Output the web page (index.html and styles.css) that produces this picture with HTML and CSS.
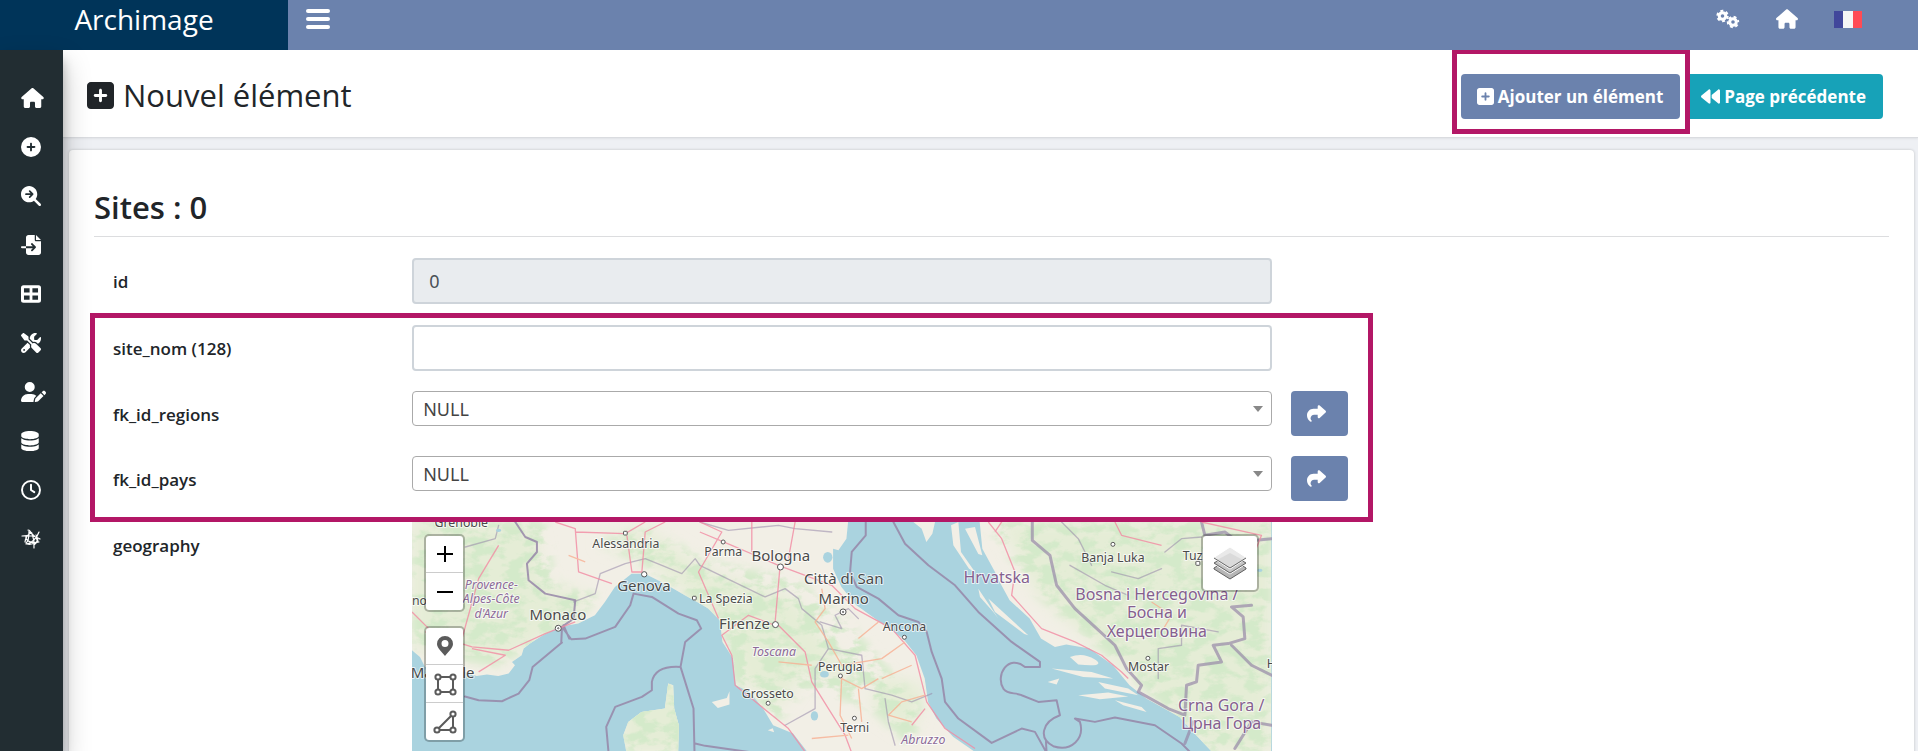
FILE: index.html
```html
<!DOCTYPE html>
<html lang="fr">
<head>
<meta charset="utf-8">
<meta name="viewport" content="width=device-width, initial-scale=1">
<title>Archimage - Nouvel élément</title>
<link rel="stylesheet" href="styles.css">
</head>
<body>
<svg class="symbols" aria-hidden="true">
  <symbol id="i-house" viewBox="0 0 576 512"><path d="M575.8 255.5c0 18-15 32.1-32 32.1h-32l.7 160.2c0 2.7-.2 5.4-.5 8.1V472c0 22.1-17.9 40-40 40H456c-1.1 0-2.2 0-3.3-.1c-1.4 .1-2.8 .1-4.2 .1H416 392c-22.1 0-40-17.9-40-40V448 384c0-17.7-14.3-32-32-32H256c-17.7 0-32 14.3-32 32v64 24c0 22.1-17.9 40-40 40H160 128.1c-1.5 0-3-.1-4.5-.2c-1.2 .1-2.4 .2-3.6 .2H104c-22.1 0-40-17.9-40-40V360c0-.9 0-1.9 .1-2.8V287.6H32c-18 0-32-14-32-32.1c0-9 3-17 10-24L266.4 8c7-7 15-8 22-8s15 2 21 7L564.8 231.5c8 7 12 15 11 24z"/></symbol>
  <symbol id="i-circle-plus" viewBox="0 0 512 512"><path d="M256 512A256 256 0 1 0 256 0a256 256 0 1 0 0 512zM232 344V280H168c-13.3 0-24-10.7-24-24s10.7-24 24-24h64V168c0-13.3 10.7-24 24-24s24 10.7 24 24v64h64c13.3 0 24 10.7 24 24s-10.7 24-24 24H280v64c0 13.3-10.7 24-24 24s-24-10.7-24-24z"/></symbol>
  <symbol id="i-square-plus" viewBox="0 32 448 448"><path d="M64 32C28.7 32 0 60.7 0 96V416c0 35.3 28.7 64 64 64H384c35.3 0 64-28.7 64-64V96c0-35.3-28.7-64-64-64H64zM200 344V280H136c-13.3 0-24-10.7-24-24s10.7-24 24-24h64V168c0-13.3 10.7-24 24-24s24 10.7 24 24v64h64c13.3 0 24 10.7 24 24s-10.7 24-24 24H248v64c0 13.3-10.7 24-24 24s-24-10.7-24-24z"/></symbol>
  <symbol id="i-search-arrow" viewBox="0 0 512 512"><path d="M416 208c0 45.9-14.9 88.3-40 122.7L502.6 457.4c12.5 12.5 12.5 32.8 0 45.3s-32.8 12.5-45.3 0L330.7 376c-34.4 25.2-76.8 40-122.7 40C93.1 416 0 322.9 0 208S93.1 0 208 0S416 93.1 416 208z"/><path class="cut" d="M128 208h164M222 132l76 76-76 76"/></symbol>
  <symbol id="i-file-import" viewBox="0 0 512 512"><path d="M128 64c0-35.3 28.7-64 64-64H352V128c0 17.7 14.3 32 32 32H512V448c0 35.3-28.7 64-64 64H192c-35.3 0-64-28.7-64-64V336H302.1l-39 39c-9.4 9.4-9.4 24.6 0 33.9s24.6 9.4 33.9 0l80-80c9.4-9.4 9.4-24.6 0-33.9l-80-80c-9.4-9.4-24.6-9.4-33.9 0s-9.4 24.6 0 33.9l39 39H128V64zm0 224v48H24c-13.3 0-24-10.7-24-24s10.7-24 24-24H128zM512 128H384V0L512 128z"/></symbol>
  <symbol id="i-table" viewBox="0 0 512 512"><path fill-rule="evenodd" d="M64 32H448a64 64 0 0 1 64 64V416a64 64 0 0 1-64 64H64a64 64 0 0 1-64-64V96a64 64 0 0 1 64-64zM76 108V220H220V108zM292 108V220H436V108zM76 292V404H220V292zM292 292V404H436V292z"/></symbol>
  <symbol id="i-tools" viewBox="0 0 512 512"><path d="M78.6 5C69.1-2.4 55.6-1.5 47 7L7 47c-8.5 8.5-9.4 22-2.1 31.6l80 104c4.5 5.9 11.6 9.4 19 9.4h54.1l109 109c-14.7 29-10 65.4 14.3 89.6l112 112c12.5 12.5 32.8 12.5 45.3 0l64-64c12.5-12.5 12.5-32.8 0-45.3l-112-112c-24.2-24.2-60.6-29-89.6-14.3l-109-109V104c0-7.5-3.5-14.5-9.4-19L78.6 5zM19.9 396.1C7.2 408.8 0 426.1 0 444.1C0 481.6 30.4 512 67.9 512c18 0 35.3-7.2 48-19.9L233.7 374.3c-7.8-20.9-9-43.6-3.6-65.1l-61.7-61.7L19.9 396.1zM512 144c0-10.5-1.1-20.7-3.2-30.5c-2.4-11.2-16.1-14.1-24.2-6l-63.9 63.9c-3 3-7.1 4.7-11.3 4.7H352c-8.8 0-16-7.2-16-16V102.6c0-4.2 1.7-8.3 4.7-11.3l63.9-63.9c8.1-8.1 5.2-21.8-6-24.2C388.7 1.1 378.5 0 368 0C288.5 0 224 64.5 224 144l0 .8 85.3 85.3c36-9.1 75.8 .5 104 28.7L429 274.5c49-23 83-72.8 83-130.5zM56 432a24 24 0 1 1 48 0 24 24 0 1 1 -48 0z"/></symbol>
  <symbol id="i-user-pen" viewBox="0 0 640 512"><path d="M224 256A128 128 0 1 0 224 0a128 128 0 1 0 0 256zm-45.7 48C79.8 304 0 383.8 0 482.3C0 498.7 13.3 512 29.7 512H322.8c-3.1-8.8-3.7-18.4-1.4-27.8l15-60.1c2.8-11.3 8.6-21.5 16.8-29.7l40.3-40.3c-32.1-31-75.7-50.1-123.9-50.1H178.3zm435.5-68.3c-15.6-15.6-40.9-15.6-56.6 0l-29.4 29.4 71 71 29.4-29.4c15.6-15.6 15.6-40.9 0-56.6l-14.4-14.4zM375.9 417c-4.1 4.1-7 9.2-8.4 14.9l-15 60.1c-1.4 5.5 .2 11.2 4.2 15.2s9.7 5.6 15.2 4.2l60.1-15c5.6-1.4 10.8-4.3 14.9-8.4L576.1 358.7l-71-71L375.9 417z"/></symbol>
  <symbol id="i-database" viewBox="0 0 448 512"><path d="M448 80v48c0 44.2-100.3 80-224 80S0 172.2 0 128V80C0 35.8 100.3 0 224 0S448 35.8 448 80zM393.2 214.7c20.8-7.4 39.9-16.9 54.8-28.6V288c0 44.2-100.3 80-224 80S0 332.2 0 288V186.1c14.9 11.8 34 21.2 54.8 28.6C99.7 230.7 159.5 240 224 240s124.3-9.3 169.2-25.3zM0 346.1c14.9 11.8 34 21.2 54.8 28.6C99.7 390.7 159.5 400 224 400s124.3-9.3 169.2-25.3c20.8-7.4 39.9-16.9 54.8-28.6V432c0 44.2-100.3 80-224 80S0 476.2 0 432V346.1z"/></symbol>
  <symbol id="i-clock" viewBox="0 0 512 512"><g fill="none" stroke="currentColor" stroke-width="50" stroke-linecap="round" stroke-linejoin="round"><circle cx="256" cy="256" r="230"/><path d="M256 120v136l84 56"/></g></symbol>
  <symbol id="i-orbit" viewBox="0 0 20 20"><g fill="none" stroke="currentColor" stroke-width="1.2" stroke-linecap="round" stroke-linejoin="round"><path d="M1 7c6-1 14 0 18 3M7 1c3 0 7 8 6 18M18 3c-2 6-8 12-13 12M4 13c0-3 3-9 7-9M5 7c-1 5 6 8 13 6M8 3c3 1 8 6 9 10M5 14c2-1 3-6 3-12M6 15c4 1 10-1 11-4M15 6c2 3 2 7-2 10"/></g></symbol>
  <symbol id="i-share" viewBox="0 0 512 512"><path d="M307 34.8c-11.5 5.1-19 16.6-19 29.2v64H176C78.8 128 0 206.8 0 304C0 417.3 81.5 467.9 100.2 478.1c2.5 1.4 5.3 1.9 8.1 1.9c10.9 0 19.7-8.9 19.7-19.7c0-7.5-4.3-14.4-9.8-19.5C108.8 431.9 96 414.4 96 384c0-53 43-96 96-96h96v64c0 12.6 7.4 24.1 19 29.2s25 3 34.4-5.4l160-144c6.7-6.1 10.6-14.7 10.6-23.8s-3.8-17.7-10.6-23.8l-160-144c-9.4-8.5-22.9-10.6-34.4-5.4z"/></symbol>
  <symbol id="i-backward" viewBox="0 0 512 512"><path d="M459.5 440.6c9.5 7.9 22.8 9.7 34.1 4.4s18.4-16.6 18.4-29V96c0-12.4-7.2-23.7-18.4-29s-24.5-3.6-34.1 4.4L288 214.3V256v41.7L459.5 440.6zM256 352V256 128 96c0-12.4-7.2-23.7-18.4-29s-24.5-3.6-34.1 4.4l-192 160C4.2 237.5 0 246.5 0 256s4.2 18.5 11.5 24.6l192 160c9.5 7.9 22.8 9.7 34.1 4.4s18.4-16.6 18.4-29V352z"/></symbol>
  <symbol id="i-gears" viewBox="0 0 24 20"><g fill="none" stroke="currentColor"><circle cx="6.5" cy="7" r="3.3" stroke-width="3"/><circle cx="6.5" cy="7" r="5.2" stroke-width="2" stroke-dasharray="2.9 2.545"/><circle cx="17" cy="13" r="3.3" stroke-width="3"/><circle cx="17" cy="13" r="5.2" stroke-width="2" stroke-dasharray="2.9 2.545" stroke-dashoffset="-2.7"/></g></symbol>
</svg>

<header class="topbar">
  <a class="brand" href="#">Archimage</a>
  <nav class="topnav" aria-label="Navigation principale">
    <button class="burger" type="button" aria-label="Menu"><span></span><span></span><span></span></button>
    <div class="topnav-links">
      <a href="#" aria-label="Paramètres"><svg width="24" height="20"><use href="#i-gears"/></svg></a>
      <a href="#" aria-label="Accueil"><svg width="22" height="20"><use href="#i-house"/></svg></a>
      <a href="#" aria-label="Français"><svg width="28" height="17" viewBox="0 0 28 17"><path fill="#41479b" d="M0 0h10v17H0z"/><path fill="#f5f5f5" d="M9 0h10v17H9z"/><path fill="#ff4b55" d="M19 0h9v17h-9z"/></svg></a>
    </div>
  </nav>
</header>

<div class="shell">
  <nav class="sidebar" aria-label="Outils">
    <a href="#" aria-label="Accueil"><svg width="23" height="20"><use href="#i-house"/></svg></a>
    <a href="#" aria-label="Ajouter"><svg width="20" height="20"><use href="#i-circle-plus"/></svg></a>
    <a href="#" aria-label="Rechercher"><svg width="20" height="20"><use href="#i-search-arrow"/></svg></a>
    <a href="#" aria-label="Importer"><svg width="20" height="20"><use href="#i-file-import"/></svg></a>
    <a href="#" aria-label="Tables"><svg width="20" height="20"><use href="#i-table"/></svg></a>
    <a href="#" aria-label="Maintenance"><svg width="20" height="20"><use href="#i-tools"/></svg></a>
    <a href="#" aria-label="Utilisateurs"><svg width="25" height="20"><use href="#i-user-pen"/></svg></a>
    <a href="#" aria-label="Base de données"><svg width="18" height="20"><use href="#i-database"/></svg></a>
    <a href="#" aria-label="Historique"><svg width="20" height="20"><use href="#i-clock"/></svg></a>
    <a href="#" aria-label="Réseau"><svg width="20" height="20"><use href="#i-orbit"/></svg></a>
  </nav>

  <main class="content">
    <div class="page-head">
      <h1><svg width="27" height="27"><use href="#i-square-plus"/></svg>Nouvel élément</h1>
      <div class="actions">
        <div class="marked">
          <button class="btn btn-primary" type="submit" form="item"><svg width="17" height="17"><use href="#i-square-plus"/></svg>Ajouter un élément</button>
          <div class="frame frame-action"></div>
        </div>
        <a class="btn btn-info" href="#"><svg width="19" height="19"><use href="#i-backward"/></svg>Page précédente</a>
      </div>
    </div>

    <section class="card">
      <h2>Sites : 0</h2>
      <form class="fields" id="item">
        <div class="row">
          <label for="id">id</label>
          <div class="control"><input class="text" id="id" type="text" value="0" readonly></div>
        </div>
        <div class="fields marked">
          <div class="row">
            <label for="site_nom">site_nom (128)</label>
            <div class="control"><input class="text" id="site_nom" type="text" maxlength="128"></div>
          </div>
          <div class="row">
            <label for="fk_id_regions">fk_id_regions</label>
            <div class="control"><div class="select"><select id="fk_id_regions"><option>NULL</option></select></div></div>
            <button class="btn btn-primary btn-go" type="button" aria-label="Ouvrir regions"><svg width="19" height="19"><use href="#i-share"/></svg></button>
          </div>
          <div class="row">
            <label for="fk_id_pays">fk_id_pays</label>
            <div class="control"><div class="select"><select id="fk_id_pays"><option>NULL</option></select></div></div>
            <button class="btn btn-primary btn-go" type="button" aria-label="Ouvrir pays"><svg width="19" height="19"><use href="#i-share"/></svg></button>
          </div>
          <div class="frame frame-fields"></div>
        </div>
        <div class="row">
          <span class="label" id="geo-label">geography</span>
          <div class="control">
            <div class="map" role="group" aria-labelledby="geo-label">
              <svg class="tiles" viewBox="0 0 2580 693">
                <defs>
                  <clipPath id="land">
                    <path d="M0 0V385L24 405 39 435 80 440 159 450 194 462 225 458 259 462 290 455 309 430 300 420 329 400 335 380 354 365 389 342 439 315 499 305 549 280 579 240 609 195 659 155 699 155 759 185 819 220 864 245 889 260 924 295 932 360 964 410 972 490 1014 510 1054 560 1084 610 1144 635 1189 693H1694L1624 645 1574 590 1549 540 1539 470 1514 400 1474 350 1404 300 1334 250 1289 195 1264 140 1264 80 1280 85 1304 50 1309 0z"/>
                    <path d="M1704 0L1712 80 1750 150 1764 180 1794 235 1854 290 1888 350 1930 375 1964 368 2034 380 2104 430 2154 490 2204 530 2304 585 2354 640 2404 693H2580V0z"/>
                    <path d="M769 485L784 490 787 560 801 610 799 693H644L634 640 649 600 689 570 759 560z"/>
                    <path d="M1505 0L1530 20 1544 60 1562 35 1570 0zM1618 10L1640 0 1648 90 1690 150 1672 140 1625 70zM1660 20L1690 15 1712 100 1700 96zM1700 200L1760 290 1745 270 1705 225zM1730 230L1850 340 1838 336 1750 270zM1975 405q40-15 75 8t-50 15zM1920 440l120 10 65 20-90-5zM2000 520l90-8 60 12-85 8zM2060 480l90 20 30 20-100-20zM1908 480l35-10-8 18zM2110 535l80 20 15 15-70-20zM900 540l45-12 8-20v40l-35 10zM1068 625l15-6 4 12z"/>
                  </clipPath>
                  <filter id="soft" x="-20%" y="-20%" width="140%" height="140%"><feGaussianBlur stdDeviation="24"/></filter>
                  <filter id="woods" x="0" y="0" width="100%" height="100%">
                    <feTurbulence type="fractalNoise" baseFrequency="0.018 0.03" numOctaves="5" seed="7"/>
                    <feColorMatrix values="0 0 0 0 0.66 0 0 0 0 0.82 0 0 0 0 0.59 0 5 0 0 -2.1" result="n"/>
                    <feGaussianBlur in="SourceGraphic" stdDeviation="14" result="s"/>
                    <feComposite in="n" in2="s" operator="in"/>
                  </filter>
                </defs>
                <path fill="#aad3df" d="M0 0H2580V693H0z"/>
                <g clip-path="url(#land)">
                  <path fill="#f2efe6" d="M0 0H2580V693H0z"/>
                  <g fill="#e5edd6" filter="url(#soft)">
                    <path d="M0 0H360L400 190 540 220 470 300 250 430 0 380zM560 60L700 20 900 150 1150 230 1330 480 1180 450 1100 560 980 470 960 340 860 240 700 110zM1760 0H2580V693H2400L2150 450 1880 220zM630 470H830V693H630zM1400 460L1540 490 1500 640 1380 560z"/>
                  </g>
                  <g filter="url(#woods)">
                    <path fill="#000" d="M0 0H400L430 190 560 220 490 300 250 430 0 380zM560 60L700 20 900 120 1150 170 1300 290 1480 500 1530 560 1500 680 1380 560 1180 500 1100 600 960 470 930 300 860 240 700 130zM1720 0H2580V693H2400L2150 450 1880 220zM630 470H830V693H630z"/>
                  </g>
                </g>
                <g fill="none" stroke="#9686a8" stroke-linejoin="round" stroke-linecap="round">
                  <g stroke-width="6" opacity=".85">
                    <path d="M310 0L340 45 375 60 375 90 345 125 350 175 400 215 490 235 485 290 450 315 478 352 520 350 610 315 655 250 665 215 720 225 800 275 855 295 868 320 820 360 806 435 845 560 848 693M450 320L448 362M455 310L472 350M450 362L362 435 352 475 320 515 270 538 200 535 159 524M806 435Q730 430 720 480V505L690 525 610 555 583 615 590 693M850 665L880 672 1030 693"/>
                    <path d="M1362 0V40L1320 90 1315 150 1335 195 1400 230 1460 280 1520 300 1545 330 1560 390 1590 470 1600 540 1640 590 1740 663 1830 620 1870 630 1905 693M1445 0L1480 65 1550 130 1630 190 1700 270 1800 360 1885 420 1885 435 1840 435C1790 395 1750 460 1775 500C1790 520 1810 510 1830 520L1880 540 1935 535 1945 580C1890 600 1880 650 1925 673C1980 690 2020 650 2005 600L1990 590 2050 600 2110 587 2230 610 2310 665 2335 690M1905 693L1903 660"/>
                    <path stroke-width="9" opacity=".8" d="M1862 0V55L1915 100 1935 190 1990 260 2045 310 2110 370 2145 440 2190 490 2180 510 2270 560 2320 580 2325 490 2355 480 2360 430 2430 420 2405 370 2450 365 2500 350 2495 285 2460 255 2520 250M2460 370L2520 430 2580 460M2345 600L2320 665M2370 0L2380 40 2440 30 2480 60 2580 50M2470 680L2520 600 2580 610"/>
                  </g>
                  <g stroke-width="4" opacity=".55">
                    <path d="M160 75L250 50 260 10M485 240L550 215 565 155 640 125 700 110 750 130 810 155 850 110 864 130 1060 225 1120 200 1160 230 1170 260 1230 310 1250 380 1350 400 1360 500 1440 520 1500 540 1560 515M864 0L950 25 1100 10 1150 20 1260 30M1225 300L1290 320 1270 280 1310 260 1340 290M1250 380L1210 440 1210 560 1120 610M1420 530L1430 600 1450 670M1975 130L2080 190 2150 220M1950 0L2000 50 2040 130M2100 150L2180 170 2250 140M2260 90L2310 50 2370 45M2240 470V380L2310 370 2310 310 2420 330"/>
                  </g>
                </g>
                <g fill="none" stroke="#f28ba3" stroke-width="4" stroke-linejoin="round" opacity=".8">
                  <path d="M430 0L490 20 500 150 600 185M490 30L640 35 700 0M645 40L660 150 690 150 700 30 760 0M0 270L50 320 100 350 180 375 290 385 400 335 490 300M180 380L280 400 200 450M40 330L150 350 200 170 260 70M864 30L960 70 1100 130 1260 190 1330 260 1440 320 1510 400 1545 540 1600 620 1690 680M1105 130L1090 300 1120 330 1180 390 1200 480 1250 560 1300 640 1320 693M1090 310L1010 280 930 340 960 400 970 490 1130 620 1180 690M1020 0V90M1150 0L1130 110M1500 610L1540 560M864 0L930 30 860 150 920 290M1730 0L1770 50 1810 150 1800 220 1890 320 1990 360 2070 400 2130 450 2150 470M1770 0L1750 30M2110 0L2130 40 2250 70M2370 0L2550 40 2530 90"/>
                  <path stroke="#f8b093" d="M1230 200L1240 260 1210 300 1250 360 1290 430 1410 410 1480 360M1290 460L1285 580 1320 650M1410 470L1500 430M1340 500L1350 600M1290 470L1350 500 1400 470M1100 420L1200 430M1500 600L1430 580 1470 540 1540 520M1310 640L1200 650M1340 350L1400 300M470 100L520 120M2220 240L2280 280 2250 330"/>
                </g>
                <g fill="#aad3df">
                  <ellipse cx="1248" cy="106" rx="14" ry="16"/><ellipse cx="1238" cy="457" rx="13" ry="10"/><ellipse cx="1208" cy="582" rx="11" ry="14"/><ellipse cx="260" cy="25" rx="8" ry="5"/><ellipse cx="2545" cy="145" rx="8" ry="5"/>
                </g>
                <g fill="#fff" stroke="#555" stroke-width="3">
                  <circle cx="697" cy="157" r="8"/><circle cx="1106" cy="135" r="9"/><circle cx="1091" cy="308" r="9"/><rect x="635" y="28" width="11" height="11" rx="2"/><rect x="842" y="223" width="11" height="11" rx="2"/><circle cx="934" cy="60" r="6"/><circle cx="1478" cy="346" r="6"/><circle cx="1286" cy="462" r="6"/><circle cx="1069" cy="544" r="6"/><circle cx="1328" cy="589" r="6"/><circle cx="2104" cy="67" r="6"/><circle cx="2209" cy="409" r="6"/><rect x="2353" y="118" width="12" height="12" rx="2"/>
                  <circle cx="439" cy="319" r="9"/><circle cx="1294" cy="270" r="9"/><circle cx="439" cy="319" r="2"/><circle cx="1294" cy="270" r="2"/>
                </g>
                <g class="town">
                  <text x="148" y="14">Grenoble</text><text x="642" y="78">Alessandria</text>
                  <text x="0" y="248" class="start">no</text><text x="934" y="102">Parma</text><text x="942" y="242">La Spezia</text>
                  <text x="1478" y="328">Ancona</text><text x="1286" y="446">Perugia</text><text x="1068" y="529">Grosseto</text><text x="1329" y="630">Terni</text>
                  <text x="2104" y="119">Banja Luka</text><text x="2314" y="113" class="start">Tuzla</text><text x="2211" y="448">Mostar</text><text x="2566" y="437" class="start">H</text>
                </g>
                <g class="city">
                  <text x="696" y="208">Genova</text><text x="438" y="294">Monaco</text><text x="-4" y="468" class="start">Marseille</text>
                  <text x="1107" y="116">Bologna</text><text x="1296" y="185">Città di San</text><text x="1296" y="245">Marino</text><text x="998" y="322">Firenze</text>
                </g>
                <g class="region">
                  <text x="238" y="200">Provence-</text><text x="238" y="244">Alpes-Côte</text><text x="238" y="288">d'Azur</text>
                  <text x="1086" y="401">Toscana</text><text x="1535" y="667">Abruzzo</text>
                </g>
                <g class="country">
                  <text x="1755" y="182">Hrvatska</text><text x="2236" y="234">Bosna i Hercegovina /</text><text x="2236" y="289">Босна и</text><text x="2236" y="345">Херцеговина</text>
                  <text x="2429" y="566">Crna Gora /</text><text x="2429" y="622">Црна Гора</text>
                </g>
              </svg>
              <div class="map-tools">
                <div class="bar">
                  <button type="button" aria-label="Zoom avant"><svg width="16" height="16"><path d="M8 0v16M0 8h16" stroke="#000" stroke-width="2"/></svg></button>
                  <button type="button" aria-label="Zoom arrière"><svg width="16" height="16"><path d="M0 8h16" stroke="#000" stroke-width="2"/></svg></button>
                </div>
                <div class="bar">
                  <button type="button" aria-label="Marqueur"><svg width="16" height="20" viewBox="0 0 16 20"><path fill="#5b5b5b" fill-rule="evenodd" d="M8 0a8 8 0 0 1 8 8c0 4-5 8-8 12C5 16 0 12 0 8a8 8 0 0 1 8-8zm0 4a3 3 0 1 0 0 7 3 3 0 0 0 0-7z"/></svg></button>
                  <button type="button" aria-label="Rectangle"><svg width="24" height="24" viewBox="0 0 24 24"><g fill="#fff" stroke="#5b5b5b" stroke-width="2"><path d="M5 5h15v15H5z"/><circle cx="5" cy="5" r="2.6"/><circle cx="20" cy="5" r="2.6"/><circle cx="5" cy="20" r="2.6"/><circle cx="20" cy="20" r="2.6"/></g></svg></button>
                  <button type="button" aria-label="Polygone"><svg width="24" height="24" viewBox="0 0 24 24"><g fill="#fff" stroke="#5b5b5b" stroke-width="2"><path d="M4 20L20 4v16z"/><circle cx="4" cy="20" r="2.6"/><circle cx="20" cy="4" r="2.6"/><circle cx="20" cy="20" r="2.6"/></g></svg></button>
                </div>
              </div>
              <button class="layers" type="button" aria-label="Couches"><svg width="34" height="34" viewBox="0 0 34 34"><path fill="#b5b5b5" stroke="#5f5f5f" d="M1 22v1l16 10 16-10v-1L17 12z"/><path fill="#c9c9c9" stroke="#fff" d="M1 16l16-10 16 10v2L17 28 1 18z"/><path fill="#c4c4c4" stroke="#666" d="M1 17l16 10 16-10-16-9z"/><path fill="#e9e9e9" stroke="#fff" d="M0 12L17 1l17 11-17 11z"/><path fill="#dadada" d="M4 14L17 7l13 7-13 8z"/><path fill="none" stroke="#666" d="M1 12l16 10 16-10"/></svg></button>
            </div>
          </div>
        </div>
      </form>
    </section>
  </main>
</div>
</body>
</html>
```
FILE: styles.css
```css
* { box-sizing: border-box; }

body {
  margin: 0;
  height: 100vh;
  display: flex;
  flex-direction: column;
  overflow: hidden;
  background: #eef0f4;
  color: #212529;
  font-family: "Open Sans", "Noto Sans", sans-serif;
  font-size: 18px;
}

svg { display: block; flex: none; fill: currentColor; }
a { color: inherit; text-decoration: none; }
button, input, select { font: inherit; color: inherit; }
button { cursor: pointer; }
.symbols { position: absolute; width: 0; height: 0; }

/* Top bar */
.topbar { display: flex; flex: none; height: 50px; color: #fff; background: #6b82ad; }
.brand {
  width: 288px;
  text-align: center;
  background: #003459;
  font-size: 28px;
  line-height: 38px;
}
.topnav {
  flex: 1;
  display: flex;
  align-items: center;
  justify-content: space-between;
  padding: 0 56px 12px 18px;
}
.burger {
  display: flex;
  flex-direction: column;
  gap: 4px;
  width: 24px;
  padding: 0;
  border: 0;
  background: none;
}
.burger span { height: 4px; border-radius: 2px; background: #fff; }
.topnav-links { display: flex; align-items: center; gap: 36px; }

/* Side bar */
.shell { flex: 1; display: flex; min-height: 0; }
.sidebar {
  z-index: 2;
  flex: none;
  display: flex;
  flex-direction: column;
  gap: 29px;
  width: 63px;
  padding: 38px 0 0 21px;
  color: #fff;
  background: #222d32;
  box-shadow: 0 14px 28px rgba(0, 0, 0, .25), 0 10px 10px rgba(0, 0, 0, .22);
}
.cut {
  fill: none;
  stroke: #222d32;
  stroke-width: 44;
  stroke-linecap: round;
  stroke-linejoin: round;
}

/* Page heading */
.content { flex: 1; min-width: 0; overflow-y: auto; scrollbar-width: none; }
.page-head {
  display: flex;
  align-items: flex-start;
  justify-content: space-between;
  padding: 24px 35px 18px 24px;
  background: #fff;
  border-bottom: 1px solid #dadce0;
  box-shadow: 0 1px 2px rgba(0, 0, 0, .06);
}
h1, h2 { margin: 0; font-size: 31px; line-height: 42px; }
h1 { display: flex; align-items: center; gap: 9px; font-weight: 400; }
.actions { display: flex; gap: 5px; }
.marked { position: relative; }
.btn {
  display: flex;
  align-items: center;
  gap: 4px;
  height: 45px;
  padding: 0 17px 0 16px;
  border: 0;
  border-radius: 4px;
  color: #fff;
  font-size: 17px;
  font-weight: 700;
  white-space: nowrap;
}
.btn-primary { background: #6b82ad; }
.btn-info { background: #17a2b8; }
.btn-go { width: 57px; }

.frame {
  position: absolute;
  z-index: 1;
  border: 5px solid #b31766;
  pointer-events: none;
}
.frame-action { inset: -25px -10px -15px -9px; }
.frame-fields { inset: -12px calc(33.333% - 82px) -21px -4px; }

/* Form card */
.card {
  margin: 12px 4px 0 6px;
  padding: 36px 25px;
  border-radius: 4px;
  background: #fff;
  box-shadow: 0 0 3px rgba(0, 0, 0, .2);
}
h2 { padding-bottom: 8px; border-bottom: 1px solid #dcdddf; margin-bottom: 21px; font-weight: 600; }
.fields { display: flex; flex-direction: column; gap: 21px; }
.fields .fields { gap: 20px; }
.row { display: grid; grid-template-columns: 2fr 6fr 4fr; align-items: start; }
.row > label, .label { padding: 11px 19px 0; font-size: 17px; font-weight: 600; line-height: 25px; }
.control { min-width: 0; padding: 0 19px; }
.text {
  display: block;
  width: 100%;
  height: 46px;
  padding: 0 15px;
  border: 2px solid #ced4da;
  border-radius: 4px;
  background: #fff;
  color: #495057;
  font-family: "Noto Sans", sans-serif;
}
.text:read-only { background: #e9ecef; }
.select { position: relative; }
.select select {
  appearance: none;
  display: block;
  width: 100%;
  height: 35px;
  padding: 0 10px;
  border: 1px solid #aaa;
  border-radius: 4px;
  background: #fff;
  color: #444;
  font-family: "Noto Sans", sans-serif;
}
.select::after {
  content: "";
  position: absolute;
  right: 9px;
  top: 15px;
  border: 5px solid transparent;
  border-top: 6px solid #888;
  border-bottom: 0;
  pointer-events: none;
}

/* Map */
.map { position: relative; height: 500px; overflow: hidden; background: #aad3df; }
.tiles { width: 100%; height: auto; }
.tiles text {
  text-anchor: middle;
  fill: #4a4a4a;
  stroke: rgba(255, 255, 255, .7);
  stroke-width: 6px;
  stroke-linejoin: round;
  paint-order: stroke;
  font-family: "Noto Sans", sans-serif;
}
.tiles .start { text-anchor: start; }
.tiles .town text { font-size: 37px; }
.tiles .city text { font-size: 45px; }
.tiles .region text { font-size: 37px; font-style: italic; fill: #8d6b99; }
.tiles .country text { font-size: 48px; fill: #85608f; }
.map-tools {
  position: absolute;
  top: 12px;
  left: 12px;
  display: flex;
  flex-direction: column;
  gap: 14px;
}
.bar, .layers {
  border: 2px solid rgba(0, 0, 0, .25);
  border-radius: 5px;
  background: #fff;
  background-clip: padding-box;
}
.bar button {
  display: grid;
  place-items: center;
  width: 37px;
  height: 36px;
  padding: 0;
  border: 0;
  background: none;
}
.bar button + button { height: 38px; border-top: 1px solid #ccc; }
.layers {
  position: absolute;
  top: 12px;
  right: 13px;
  display: grid;
  place-items: center;
  width: 58px;
  height: 58px;
  padding: 0;
}
```
